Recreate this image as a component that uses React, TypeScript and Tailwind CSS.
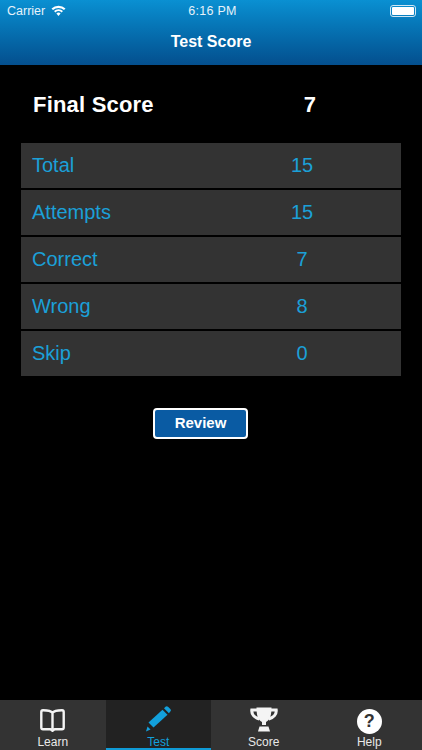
import React from "react";

const rows: [string, string][] = [
  ["Total", "15"],
  ["Attempts", "15"],
  ["Correct", "7"],
  ["Wrong", "8"],
  ["Skip", "0"],
];

const font = { fontFamily: '"Liberation Sans", Arial, sans-serif' };

function Tab({ label, active, children }: { label: string; active?: boolean; children: React.ReactNode }) {
  return (
    <div className={`flex-1 flex flex-col items-center h-[50px] ${active ? "bg-[#222222] border-b-2 border-[#0f9ad6] text-[#12a0dc]" : "text-[#e8e8e8]"}`}>
      <div className="h-[30px] shrink-0 mt-[5px] flex items-center justify-center">{children}</div>
      <div className="text-[12px] leading-[14px] shrink-0">{label}</div>
    </div>
  );
}

export default function App() {
  return (
    <div className="w-[422px] h-[750px] bg-black flex flex-col overflow-hidden text-white" style={font}>
      <div className="h-[65px] shrink-0 bg-gradient-to-b from-[#0a90d2] to-[#044f8e] flex flex-col">
        <div className="h-[20px] mt-[1px] grid grid-cols-3 items-center pl-[7px] pr-[6px] text-[12.500px] text-[#e6f2fa]">
          <div className="flex items-center gap-[6px]">
            <span>Carrier</span>
            <svg width="15" height="11" viewBox="0 0 15 11" fill="white" className="-mt-[2px]">
              <path d="M7.500 11 5.400 8.600a3 3 0 0 1 4.200 0z" />
              <path d="M4.400 7.500 3 6a6.600 6.600 0 0 1 9 0l-1.400 1.500a4.600 4.600 0 0 0-6.200 0z" />
              <path d="M2 5 .5 3.400a10.300 10.300 0 0 1 14 0L13 5a8.200 8.200 0 0 0-11 0z" />
            </svg>
          </div>
          <div className="text-center tracking-[0.3px] -mr-[2px]">6:16 PM</div>
          <div className="flex justify-end">
            <div className="w-[26px] h-[12px] border border-[#cfe6f4] rounded-[3px] p-[1px]">
              <div className="w-full h-full bg-white rounded-[1px]" />
            </div>
          </div>
        </div>
        <div className="text-center text-[16px] font-bold mt-[11px] leading-[20px]">Test Score</div>
      </div>

      <div className="flex-1 flex flex-col">
        <div className="grid grid-cols-[256px_42px] items-center h-[78px] pl-[33px] font-bold text-[22px] tracking-[0.2px]">
          <div>Final Score</div>
          <div className="text-center">7</div>
        </div>
        <div className="mx-[21px] flex flex-col gap-[2px]">
          {rows.map(([k, v]) => (
            <div key={k} className="h-[45px] bg-[#333333] grid grid-cols-[190px_160px] items-center pl-[11px] pb-[2px] text-[20px] text-[#1ba0d8]">
              <div>{k}</div>
              <div className="text-center">{v}</div>
            </div>
          ))}
        </div>
        <div className="flex justify-center mt-[32px]">
          <button className="w-[95px] h-[31px] bg-[#0a5ba3] border-2 border-white rounded-[4px] pb-[2px] text-[15px] font-bold text-white leading-none -ml-[21px]">
            Review
          </button>
        </div>
      </div>

      <div className="h-[50px] shrink-0 bg-[#333333] flex">
        <Tab label="Learn">
          <svg width="25" height="23" viewBox="0 0 25 23" fill="none" stroke="#f4f4f4" strokeWidth="2.400" strokeLinejoin="round">
            <path d="M12.500 3.800C11 1.800 8 1.300 3 1.300c-1 0-1.700.7-1.700 1.700v15.500c0 1 .7 1.700 1.700 1.700h7.500l2 1.500 2-1.500H22c1 0 1.700-.7 1.700-1.700V3c0-1-.7-1.700-1.700-1.700-5 0-8 .5-9.500 2.500zM12.500 3.800V20" />
          </svg>
        </Tab>
        <Tab label="Test" active>
          <svg width="26" height="26" viewBox="0 0 26 26" fill="#12a0dc" className="-mt-[3px]">
            <path d="M17.500 3.800 22.500 8.800 8.500 21.500 3.500 16.500z" />
            <path d="M19 2.300l1.500-1.500a1.800 1.800 0 0 1 2.500 0l2.300 2.300a1.800 1.800 0 0 1 0 2.500L23.900 7.200z" />
            <path d="M2.500 20.500 5.500 23.500 1 25.500z" />
          </svg>
        </Tab>
        <Tab label="Score">
          <svg width="28" height="25" viewBox="0 0 28 25" fill="#f4f4f4" className="-mt-[2px]">
            <path d="M6.500 .5h15c0 7-1 12-5.500 14.500v3h-4v-3C7.500 12.500 6.500 7.500 6.500 .5z" />
            <path d="M9.500 19.500h9l1.500 5h-12z" />
            <path fill="none" stroke="#f4f4f4" strokeWidth="3" d="M7 3H1.800c-.5 4 2.500 7.500 7.500 9M21 3h5.200c.5 4-2.500 7.500-7.500 9" />
          </svg>
        </Tab>
        <Tab label="Help">
          <div className="w-[25px] h-[25px] mt-[2px] rounded-full bg-white flex items-center justify-center text-[#333333] text-[18px] font-bold leading-none">?</div>
        </Tab>
      </div>
    </div>
  );
}
